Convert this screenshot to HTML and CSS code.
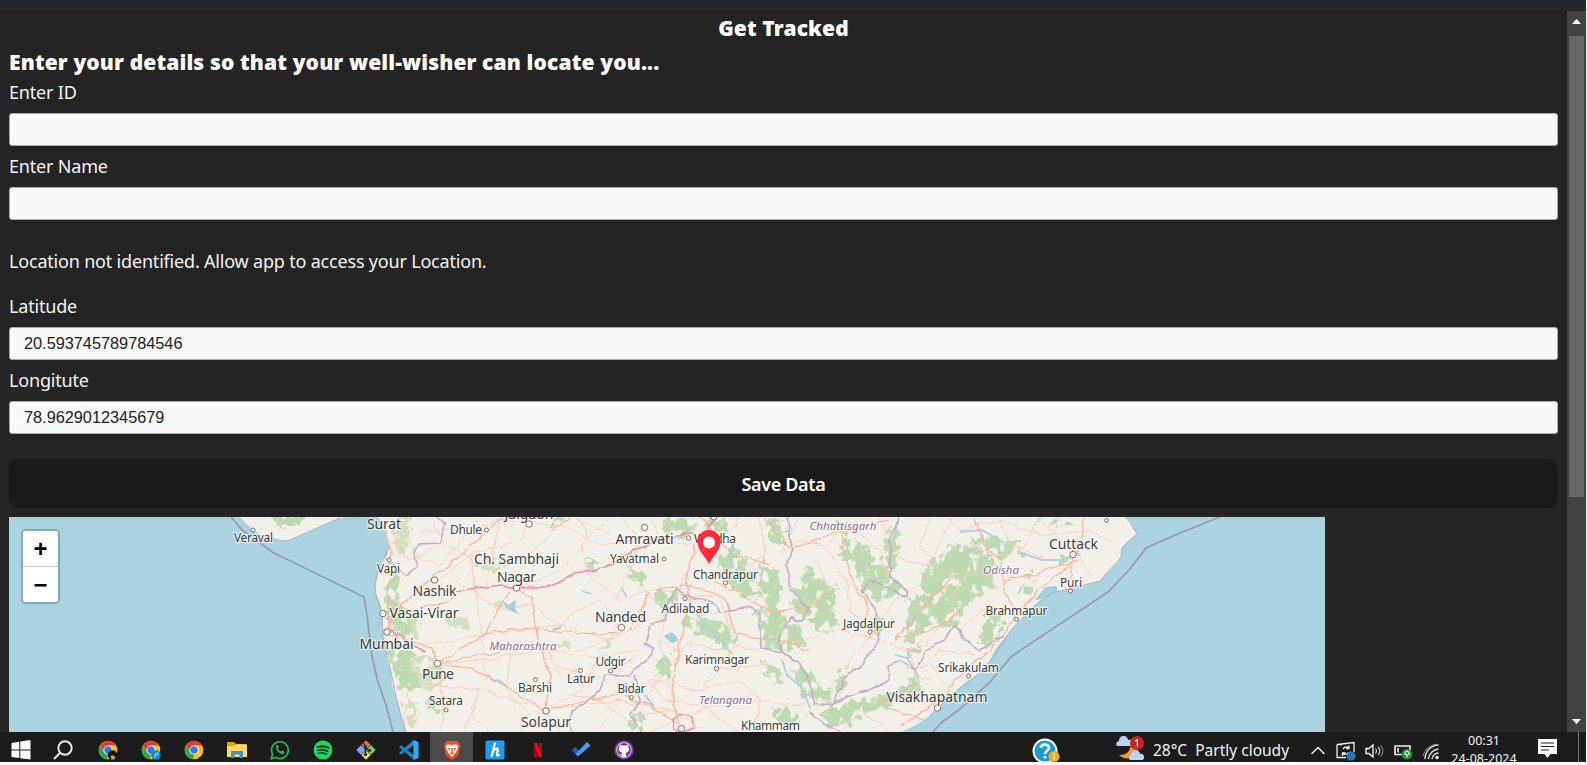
FILE: index.html
```html
<!DOCTYPE html>
<html lang="en">
<head>
<meta charset="utf-8">
<title>Get Tracked</title>
<link rel="stylesheet" href="styles.css">
</head>
<body>
<div class="screen">
  <div class="top-strip"></div>
  <div class="window">
    <main class="page">
      <h1 class="title">Get Tracked</h1>
      <h2 class="subtitle">Enter your details so that your well-wisher can locate you...</h2>
      <label class="label" for="id">Enter ID</label>
      <input class="field" id="id">
      <label class="label" for="name">Enter Name</label>
      <input class="field" id="name">
      <p class="notice">Location not identified. Allow app to access your Location.</p>
      <label class="label" for="lat">Latitude</label>
      <input class="field" id="lat" value="20.593745789784546">
      <label class="label" for="lng">Longitute</label>
      <input class="field" id="lng" value="78.9629012345679">
      <button class="save">Save Data</button>
      <div class="map">
        <svg class="map-canvas" width="1316" height="215" viewBox="9 517 1316 215">
          <defs>
            <filter id="rough" x="-5%" y="-5%" width="110%" height="110%">
              <feTurbulence type="fractalNoise" baseFrequency="0.11" numOctaves="3" seed="4" result="n"/>
              <feDisplacementMap in="SourceGraphic" in2="n" scale="19" xChannelSelector="R" yChannelSelector="G" result="d"/>
              <feTurbulence type="fractalNoise" baseFrequency="0.1 0.085" numOctaves="4" seed="9" result="m"/>
              <feColorMatrix in="m" type="matrix" values="0 0 0 0 0  0 0 0 0 0  0 0 0 0 0  9 0 0 0 -2.9" result="mask"/>
              <feComposite in="d" in2="mask" operator="in"/>
            </filter>
            <filter id="wiggle" x="-5%" y="-5%" width="110%" height="110%">
              <feTurbulence type="fractalNoise" baseFrequency="0.07" numOctaves="2" seed="2" result="n"/>
              <feDisplacementMap in="SourceGraphic" in2="n" scale="7" xChannelSelector="R" yChannelSelector="G"/>
            </filter>
            <clipPath id="land">
              <path d="M240 517L247 524 253 530 265 537 275 540 283 541 290 540 300 536 320 527 340 518 347 517Z
                M378 517L383 524 387 536 389 547 387 556 382 560 378 572 375 585 376 595 379 600 382 612 382 625 383 637 386 648 387 660 391 672 392 685 396 697 400 711 403 722 406 732H902L918 724 930 715 937 710 945 700 955 692 965 683 980 673 990 661 995 650 1003 640 1012 629 1020 621 1031 609 1040 600 1052 593 1065 590 1080 587 1100 581 1108 572 1117 563 1121 557 1122 548 1128 541 1137 534 1131 524 1124 517Z"/>
            </clipPath>
          </defs>
          <rect class="sea" x="9" y="517" width="1316" height="215"/>
          <g clip-path="url(#land)">
            <rect class="ground" x="230" y="517" width="920" height="215"/>
            <g class="forest" filter="url(#rough)">
              <path d="M270 515L305 515 300 525 280 527Z"/>
              <path class="pale" d="M395 515L412 515 406 545 398 560 392 590 402 610 415 615 420 640 408 640 388 590Z"/>
              <path d="M387 572L400 574 396 600 406 616 414 634 400 634 387 620ZM386 650L402 642 416 655 424 680 412 690 400 690 394 670ZM425 697L437 697 435 712 424 712Z"/>
              <path class="pale" d="M442 614L466 619 470 628 445 626ZM473 567L505 559 500 568 475 571ZM408 660L435 655 445 680 425 690ZM402 700L418 705 415 728 405 722Z"/>
              <path d="M548 520L566 518 568 524 550 525ZM582 562L600 560 592 567ZM626 568L642 572 645 585 632 580ZM654 592L676 590 672 608 657 607ZM658 655L672 653 669 680 658 676ZM632 717L645 718 638 730 629 728Z"/>
              <path class="pale" d="M558 641L572 644 570 650 560 649ZM605 642L616 643 610 651 602 650ZM494 601L508 604 503 609 495 606Z"/>
              <path d="M660 522L688 517 695 528 680 540 667 533ZM702 517L725 520 730 530 715 535ZM718 557L738 548 750 570 760 598 745 600 726 582Z"/>
              <path d="M684 614L705 620 730 626 738 640 728 650 705 638 686 626ZM755 612L775 604 786 620 782 650 766 650 762 630Z"/>
              <path d="M767 520L785 520 785 543 772 543ZM758 562L775 568 782 590 776 612 762 598Z"/>
              <path d="M802 565L818 578 836 583 834 600 836 633 818 632 806 618 794 610 790 590 800 588Z"/>
              <path d="M780 630L796 618 805 634 804 648 784 648ZM792 665L812 675 828 692 835 680 848 662 848 680 836 695 822 705 804 694Z"/>
              <path d="M763 662L785 672 780 688 762 676ZM772 705L798 712 800 730 775 722ZM820 714L855 699 890 694 912 684 922 690 900 702 870 712 850 724 826 728Z"/>
              <path d="M838 552L850 538 868 548 878 565 898 580 900 594 880 600 862 594 856 568Z"/>
              <path d="M874 618L890 618 880 636 870 628ZM835 524L850 526 850 536 838 532ZM886 525L900 530 898 560 885 572 884 548Z"/>
              <path d="M920 570L952 543 980 548 996 560 992 585 975 600 960 612 952 630 930 624 918 638 903 644 908 600 926 590Z"/>
              <path d="M968 542L985 535 1022 547 1028 553 1000 556ZM1022 574L1042 578 1032 590 1020 600ZM990 604L1003 620 992 646 978 638 985 620Z"/>
              <path d="M1060 557L1070 557 1064 566 1056 564ZM905 650L922 640 916 654 903 665ZM1055 517L1075 520 1068 526 1052 524ZM912 670L925 677 918 688 908 688Z"/>
              <path d="M995 620L1003 632 987 648 979 643ZM1038 522L1056 519 1052 525Z"/>
            </g>
            <g class="water">
              <path d="M501 599l7 6 8-5-1 9 4 5-8-3-5-3zM664 636l8-4 4 4 2 5-6 2-4-3zM915 613l-5 14 2-1 5-12zM1035 600l10-13 12-1 0 6-10 6z"/>
              <path class="stream" d="M488 675l6 6 5-1 8 7M582 591l9 3M621 588l6 9M553 629l8-1M645 695l8 10 1 5M641 717l5 3M782 660l5 15 15 13 8 20M1022 553l20 7 20 0 18-6M960 532l22-2 22 13M895 655l12 3 10 15M695 612l12 14 25 28M735 538l-6 20 5 10"/>
            </g>
            <g filter="url(#wiggle)">
              <path class="road minor" d="M396 517L420 560 440 565 480 517M420 530H470L500 520 560 525 600 545 640 540M500 517L495 545 486 586M530 517L520 540 470 555 440 580M580 517L590 540 560 570 515 590M610 517L580 545 590 575 620 600 650 590M470 555L475 590 482 640 486 680M486 634L560 625 610 640 650 620M435 665L480 660 540 650 600 657 640 650M435 665L445 700 440 732M400 640L430 645 486 634M420 684L480 690 545 710 620 700 670 710M545 710L560 732M600 657L580 690 545 710 520 732M547 650L560 675 580 670M650 517L660 540 690 545M640 585L665 610 660 640 680 650M690 640L660 675 640 715 680 710M660 590L690 595 720 597 735 645 760 650M735 645L720 670 700 690 650 680M700 690L740 680 760 700 755 732M720 670L770 665 790 680M650 732L680 717 710 732M680 717L670 690 660 640M680 717L740 700 805 705M760 517L765 550 755 580 770 610M720 582L755 560 765 555M740 517L730 535 700 545 690 560M800 517L780 555 800 540 830 545 840 522 880 550 890 580M825 545L845 580 850 610 870 630M870 637L835 630 805 640 780 650M870 637L895 600 920 585M870 637L850 660 840 700M870 637L910 650 915 675 930 680M880 517L900 560 930 565 945 530 950 517M930 565L960 580 980 570 1000 590M945 517L960 530 1000 520 1040 535 1090 530 1115 545M1040 517L1060 540 1075 550 1090 575M960 630L980 610 1010 612M905 670L930 665 945 685M880 705L905 695 915 708M890 732L860 710 840 732M400 517L395 550 410 560 440 545M410 690L400 732M420 715L410 725M465 732L480 690M595 732L620 700"/>
              <path class="road minor" d="M430 517L445 545 480 560 530 555 555 530M455 580L500 610 530 605 560 625 575 610 600 600M600 600L620 625 610 640 575 650M530 640L555 665 600 680 640 655M510 655L505 690 530 715M480 690L470 710 490 732M570 695L600 700 625 720M690 565L680 590 700 615 740 610M700 615L690 645 730 650M620 517L640 540 630 570 615 600M575 517L610 535M650 680L665 700 700 705 740 732M790 732L815 705M815 560L830 590 810 605 790 620M905 650L925 645 950 610 960 580M1040 517L1025 545 1000 555 970 545M1000 520L1010 545 1050 560M975 655L940 650 925 665M930 517L920 545 935 560 925 580"/>
              <path class="road" d="M384 525L392 560 388 600 388 634 410 640 430 650 437 664 470 668 500 683 545 711M383 634L395 610 430 580 450 565 487 530 505 517M388 600L410 610 440 605 455 595M437 664L485 634 510 590M550 530L570 517M437 664L480 655 520 650M516 588L530 595 540 645 550 680 545 711M486 634L520 628 580 633 620 635M545 711L590 700 620 695 650 705 678 725M700 517L710 530 720 545 735 555 770 565M695 545L686 585 690 600 678 650 672 690 680 725M686 585L650 590 630 630M686 585L725 598 735 635 780 640 810 650M716 582L750 600 775 612 820 605M765 517L790 550 840 530 890 520M840 530L850 580 865 600 870 637M960 732L880 705 920 680M902 725L935 705 955 680 990 650 1015 618 1038 590 1065 570 1078 550 1085 517M1073 550L1070 590M1015 617L1005 590 1000 560 985 545 975 517M1004 580L1030 575 1078 560M960 570L930 600 895 640M895 640L930 630 960 612"/>
              <path class="road major" d="M456 592L500 585 525 587 550 587 575 573 605 567 635 549 660 540 695 532M397 633L408 645 425 652M390 628L396 638 392 647M672 720l8-6 12 3 2 10-10 5-10-3zM705 532l10-15"/>
              <path class="border" d="M436 517L444 525 440 543 420 544 414 555 416 567 405 575 395 565 386 560M788 517L793 550 787 565 790 590 800 600 810 607 802 620 790 618 780 635 780 650 800 665 810 685 815 705 830 704 870 690 890 680 888 665 900 662 915 670 925 650 945 640 955 625 965 640 980 650 1003 635M780 652L762 648 760 635 760 615 750 605 735 610 720 612 712 602 690 596 675 588M675 588L670 600 665 620 650 625 645 645 655 650 640 665 630 675 605 675 600 690 585 705 572 710 570 732M634 675L640 700 630 715 640 732M900 517L890 540 890 575 905 590 905 595 885 587 870 580 862 590 875 610 880 640 865 660 845 680 835 702M810 712L825 725 840 732"/>
            </g>
          </g>
          <path class="coast" d="M265 537L283 541 290 540 340 518M389 547L378 572 375 585 376 595 382 612 383 637 391 672 396 697 403 722 406 732M930 715L955 692 980 673 990 661 1012 629 1031 609 1052 593 1100 581 1121 557 1122 548 1137 534 1131 524"/>
          <path class="maritime" d="M231 517L242 530 274 553 364 597 367 615 372 657 378 682 386 705 393 732M933 732L941 723 960 709 990 682 1012 656 1108 592 1130 569 1146 548 1180 533 1220 517"/>
          <g class="dots">
            <circle cx="434.500" cy="580" r="3.200"/><circle cx="516.500" cy="588" r="3.200"/><circle cx="644.500" cy="527.500" r="3.200"/><circle cx="529" cy="524" r="3.200"/><circle cx="383" cy="613.500" r="3.200"/><circle cx="387" cy="632" r="3.200"/><circle cx="437.500" cy="663.500" r="3.200"/><circle cx="621.500" cy="627.500" r="3.200"/><circle cx="546" cy="711" r="3.200"/><circle cx="681.500" cy="728.500" r="3.200"/><circle cx="937.500" cy="708" r="3.200"/><circle cx="1073" cy="554.500" r="3.200"/><circle cx="714" cy="517" r="3"/>
            <circle cx="253" cy="530" r="2"/><circle cx="389" cy="560" r="2"/><circle cx="486.500" cy="530" r="2"/><circle cx="664" cy="559" r="2"/><circle cx="688.500" cy="538" r="2.200"/><circle cx="725.500" cy="583" r="2"/><circle cx="685" cy="598.500" r="2.200"/><circle cx="716.500" cy="668.500" r="2.200"/><circle cx="580.500" cy="670.500" r="2"/><circle cx="610.500" cy="671" r="2"/><circle cx="535.500" cy="679.500" r="2"/><circle cx="631.500" cy="697.500" r="2"/><circle cx="446" cy="710" r="2"/><circle cx="870" cy="632" r="2"/><circle cx="1016.500" cy="619.500" r="2"/><circle cx="1070.500" cy="591" r="2"/><circle cx="968.500" cy="676" r="2"/><circle cx="1106.500" cy="520.500" r="2"/>
          </g>
          <g class="city">
            <text x="384" y="529" textLength="34">Surat</text><text x="529" y="519" textLength="49">Jalgaon</text><text x="516.500" y="564" textLength="85">Ch. Sambhaji</text><text x="516.500" y="582" textLength="39">Nagar</text><text x="644.500" y="544" textLength="58">Amravati</text><text x="434.500" y="595.500" textLength="44">Nashik</text><text x="424" y="618" textLength="69">Vasai-Virar</text><text x="386.500" y="649" textLength="54">Mumbai</text><text x="438" y="679" textLength="32">Pune</text><text x="620.500" y="621.500" textLength="51">Nanded</text><text x="546" y="727" textLength="50">Solapur</text><text x="937" y="702" textLength="101">Visakhapatnam</text><text x="1073.500" y="549" textLength="49">Cuttack</text>
          </g>
          <g class="town">
            <text x="253.500" y="542" textLength="39">Veraval</text><text x="388.500" y="573" textLength="23">Vapi</text><text x="466" y="534" textLength="32">Dhule</text><text x="634.500" y="562.500" textLength="49">Yavatmal</text><text x="715" y="542.500" textLength="42">Wardha</text><text x="725.500" y="578.500" textLength="65">Chandrapur</text><text x="685.500" y="612.500" textLength="48">Adilabad</text><text x="717" y="663.500" textLength="64">Karimnagar</text><text x="610.500" y="666" textLength="30">Udgir</text><text x="581" y="683" textLength="28">Latur</text><text x="535" y="692" textLength="34">Barshi</text><text x="631.500" y="692.500" textLength="28">Bidar</text><text x="446" y="705" textLength="34">Satara</text><text x="770.500" y="729.500" textLength="59">Khammam</text><text x="869" y="627.500" textLength="52">Jagdalpur</text><text x="1016.500" y="615" textLength="62">Brahmapur</text><text x="1071" y="587" textLength="22">Puri</text><text x="968.500" y="671.500" textLength="61">Srikakulam</text>
          </g>
          <g class="state">
            <text x="523" y="649.500" textLength="67">Maharashtra</text><text x="725.500" y="703.500" textLength="53">Telangana</text><text x="843" y="530" textLength="67">Chhattisgarh</text><text x="1001" y="573.500" textLength="36">Odisha</text>
          </g>
          <path class="pin" d="M709 564C706 557 697.500 551 697.500 541.500a11.500 11.500 0 0 1 23 0C720.500 551 712 557 709 564Z"/>
          <circle class="pin-hole" cx="709" cy="542.500" r="6"/>
        </svg>
        <div class="zoom"><button class="zoom-btn">+</button><button class="zoom-btn">−</button></div>
      </div>
    </main>
    <div class="scrollbar">
      <svg width="9" height="5" viewBox="0 0 9 5"><path fill="#fff" d="M0 5L4.500 0 9 5Z"/></svg>
      <div class="thumb"></div>
      <svg width="9" height="5" viewBox="0 0 9 5"><path fill="#fff" d="M0 0H9L4.500 5Z"/></svg>
    </div>
  </div>
  <footer class="taskbar">
    <div class="apps">
      <span class="app first"><svg width="20" height="20" viewBox="0 0 20 20"><path fill="#fff" d="M.5 3L8.300 1.800V9.400H.5ZM9.300 1.600L19.500 0V9.400H9.300ZM.5 10.400H8.300V18L.5 17ZM9.300 10.400H19.500V19.600L9.300 18.200Z"/></svg></span>
      <span class="app search"><svg width="20" height="20" viewBox="0 0 20 20"><circle cx="12" cy="8" r="6.700" fill="none" stroke="#eee" stroke-width="1.900"/><path stroke="#eee" stroke-width="2" d="M7 13L1 19"/></svg></span>
      <span class="app"><svg width="20" height="20" viewBox="0 0 20 20"><g id="chrome"><circle cx="10" cy="10" r="9.300" fill="#fbc116"/><path fill="#e33b2e" d="M2 5.300A9.300 9.300 0 0 1 18 5.300H10L6 12.300Z"/><path fill="#2da94f" d="M2 5.300L6 12.300 10 14.500 9 19.300A9.300 9.300 0 0 1 2 5.300Z"/><circle cx="10" cy="10" r="4.600" fill="#fff"/><circle cx="10" cy="10" r="3.700" fill="#3578e5"/></g><circle cx="14.500" cy="15" r="4.700" fill="#15110f"/><path fill="#bb9b88" d="M12.500 16.500l2-1.500 3 2-1 2.500-3 .3z"/></svg></span>
      <span class="app"><svg width="20" height="20" viewBox="0 0 20 20"><use href="#chrome"/><circle cx="15" cy="15" r="4.800" fill="#1086cf"/><path stroke="#8cd0ef" fill="none" d="M13.500 18l1-5h2.500l-.5 2.500h-2"/></svg></span>
      <span class="app"><svg width="20" height="20" viewBox="0 0 20 20"><use href="#chrome"/></svg></span>
      <span class="app"><svg width="20" height="20" viewBox="0 0 20 20"><path fill="#e5a51b" d="M0 2H7L9 4H19V8H0Z"/><path fill="#ffd766" d="M0 6H7L9 4.500H20V17H0Z"/><path fill="#3c91d3" d="M4 18V11H16V18H12.500V14.500H7.500V18Z"/></svg></span>
      <span class="app"><svg width="20" height="20" viewBox="0 0 20 20"><path fill="none" stroke="#25b65b" stroke-width="1.800" d="M1.300 18.700L2.500 14A8.400 8.400 0 1 1 6 17.500Z"/><path fill="#25b65b" d="M6.400 5.500c.7-.8 1.500-.5 1.700.1l.7 1.800-.9 1.200c.7 1.500 1.800 2.400 3.200 3l1.200-1.200 2 1c.8.5-.1 2.400-1.500 2.700-3.300.5-8.200-4.500-6.400-8.600z"/></svg></span>
      <span class="app"><svg width="20" height="20" viewBox="0 0 20 20"><circle cx="10" cy="10" r="9.400" fill="#1ed760"/><path fill="none" stroke="#14351f" stroke-linecap="round" stroke-width="1.800" d="M4.500 7c4-1.200 8-.8 11.200 1M5 10.300c3.500-1 6.800-.6 9.600 1"/><path fill="none" stroke="#14351f" stroke-linecap="round" stroke-width="1.400" d="M5.500 13.300c3-.7 5.600-.4 8 .9"/></svg></span>
      <span class="app"><svg width="20" height="20" viewBox="0 0 20 20"><path fill="#f0645c" d="M10 .3L14.700 5 10 9.700 5.300 5Z"/><path fill="#78a8f5" d="M5 5.300L9.700 10 5 14.700.3 10Z"/><path fill="#7fc75a" d="M15 5.300L19.700 10 15 14.700 10.300 10Z"/><path fill="#f7d268" d="M10 10.300L14.700 15 10 19.700 5.300 15Z"/><path fill="none" stroke="#252525" stroke-width="1.400" d="M7.500 3.500L9.500 6V15M9.500 8L14 11"/><circle cx="9.500" cy="7" r="1.500" fill="#252525"/><circle cx="9.500" cy="14.500" r="1.600" fill="#252525"/><circle cx="13.500" cy="10.500" r="1.600" fill="#252525"/></svg></span>
      <span class="app"><svg width="20" height="20" viewBox="0 0 20 20"><path fill="#1685c9" d="M.3 6.500L2 5.200 15 15V19.500L.3 7.500ZM15 .5V5L2 14.800.3 13.500V12.500L14 .5Z"/><path fill="#30aaf2" d="M14.500 0L19.500 2V18L14.500 20Z"/></svg></span>
      <span class="app active"><svg width="20" height="20" viewBox="0 0 20 20"><path fill="#fa4b20" d="M5 1H15L18 4 16.500 15 10 20 3.500 15 2 4Z"/><path fill="#fff" d="M4.500 5l2.500-.8 3 .8 3-.8 2.500.8 1 2-3 6-3.500 4-3.500-4-3-6z"/><path fill="#fa4b20" d="M5.500 7.500l3 1-1 2.500zM14.500 7.500l-3 1 1 2.500zM9.300 8h1.400v4H9.300zM7.500 13l2.500-1 2.500 1-2.500 1.500z"/></svg></span>
      <span class="app"><svg width="20" height="20" viewBox="0 0 20 20"><rect x=".5" y=".5" width="19" height="19" rx="1.500" fill="#229bee"/><path fill="none" stroke="#fff" stroke-width="2.200" stroke-linecap="round" d="M9.800 3.500L6.700 16M7.500 12C9 8.500 13 7.500 12.800 10L12 14c-.2 2 1 2 2 1"/></svg></span>
      <span class="app"><svg width="20" height="20" viewBox="0 0 20 20"><path fill="#a50d13" d="M6 3H9V17H6ZM11 3H14V17H11Z"/><path fill="#e5141e" d="M6 3H9L14 17H11Z"/></svg></span>
      <span class="app"><svg width="20" height="20" viewBox="0 0 20 20"><path fill="#1f5bbd" d="M.5 10L4 7 10 13 7 16.500Z"/><path fill="#469cec" d="M7 16.500L4.500 14 16 2 19.500 5.500Z"/></svg></span>
      <span class="app"><svg width="20" height="20" viewBox="0 0 20 20"><circle cx="10" cy="10" r="8.700" fill="#fff" stroke="#7931a4" stroke-width="2"/><circle cx="10" cy="10" r="7" fill="#7931a4"/><path fill="#fff" d="M6 4.500L8.500 5.500H11.500L14 4.500 14.500 7C16 10 14.500 12.200 12 12.700V17H8V15.300C6.500 15.500 6 14.500 5.500 13.800 7 13.600 7 14.500 8 14.200V12.700C5.500 12.200 4 10 5.500 7Z"/></svg></span>
    </div>
    <div class="status">
      <span class="cell help"><svg width="28" height="28" viewBox="0 0 28 28"><circle cx="13" cy="13" r="11.500" fill="#169bd7" stroke="#fff" stroke-width="2"/><path fill="none" stroke="#fff" stroke-width="2.700" d="M8.800 9.800C9 5.500 17 5.500 17 9.500c0 3-4 3-4 6.500M13 18v2.500"/><circle cx="22" cy="18.500" r="5.500" fill="#f3aa1b"/><path stroke="#fff" stroke-width="1.600" d="M22 15v1.600M22 17.500v4"/></svg></span>
      <span class="cell weather"><svg width="28" height="26" viewBox="0 0 28 26"><path fill="#f39a2c" d="M22 10a11 11 0 0 1-19 9c8 0 10-3 12-9z"/><path fill="#b8d2f5" d="M1 10a3 3 0 0 1 2-5 4.500 4.500 0 0 1 9-1 3 3 0 0 1 3 6zM14 24a3 3 0 0 1 1-5 4.500 4.500 0 0 1 9-1 3 3 0 0 1 2 6z"/><circle cx="21" cy="7" r="7" fill="#c72220"/><path fill="none" stroke="#fff" stroke-width="1.100" d="M19.300 5L21.300 3.500V10.500"/></svg></span>
      <span class="forecast">28°C&nbsp; Partly cloudy</span>
      <span class="cell"><svg width="16" height="9" viewBox="0 0 16 9"><path fill="none" stroke="#eee" stroke-width="1.500" d="M1.500 8L8 1.500 14.500 8"/></svg></span>
      <span class="cell"><svg width="20" height="20" viewBox="0 0 20 20"><path fill="none" stroke="#eee" stroke-width="1.300" d="M1 3.500L18 1.500V11M1 3.500V16.500H10M1 3.500H6"/><path fill="none" stroke="#eee" stroke-width="1.300" d="M13 7Q9.500 4.500 7 8M13 4.500V7.500H10M6.500 12.500Q9.500 14.500 12.500 11.500M6.500 15V12H9.500"/><circle cx="15" cy="15" r="4.500" fill="#2d72bd"/></svg></span>
      <span class="cell"><svg width="20" height="16" viewBox="0 0 20 16"><path fill="none" stroke="#eee" stroke-width="1.400" d="M1 5.500H4L8 2V14L4 10.500H1Z"/><path fill="none" stroke="#ccc" stroke-width="1.200" d="M10.500 5.500q2 2.500 0 5M13 4q3.500 4 0 8"/><path fill="none" stroke="#777" stroke-width="1.200" d="M15.500 2.500q5 5.500 0 11"/></svg></span>
      <span class="cell"><svg width="20" height="18" viewBox="0 0 20 18"><path fill="none" stroke="#eee" stroke-width="1.600" d="M2 4H17V12.500H2ZM5 6V10.500"/><circle cx="14" cy="12" r="5.300" fill="#179a35"/><path fill="none" stroke="#d9ffe0" stroke-width="1.200" d="M12 12.500q0-3 2-3.500 2 .5 2 3.500zM14 12.500v3"/></svg></span>
      <span class="cell"><svg width="18" height="18" viewBox="0 0 18 18"><g fill="none" stroke="#ddd" stroke-width="1.400"><path d="M3 17A14 14 0 0 1 16.500 3M6.500 17A11 11 0 0 1 16.500 7M10 17A7 7 0 0 1 16.500 11"/></g><path stroke="#888" fill="none" d="M1 14A16 16 0 0 1 14 2"/><circle cx="15" cy="15.500" r="1.700" fill="#eee"/></svg></span>
      <div class="clock"><span>00:31</span><span>24-08-2024</span></div>
      <span class="cell note"><svg width="19" height="19" viewBox="0 0 19 19"><path fill="#fff" d="M0 0H19V15H12.500L9.500 19 6.500 15H0Z"/><path stroke="#222" stroke-width="1.200" d="M3 4H16M3 7.500H16M3 11H11"/></svg></span>
    </div>
  </footer>
</div>
</body>
</html>
```

FILE: styles.css
```css
* { box-sizing: border-box; }
body { margin: 0; background: #fff; font-family: "Noto Sans", sans-serif; color: #f3f3f3; overflow: hidden; }
.screen { width: 1586px; height: 762px; display: flex; flex-direction: column; background: #242424; overflow: hidden; }
.top-strip { flex: 0 0 11px; background: #23282c; }
.window { flex: 0 0 721px; display: flex; overflow: hidden; }
.page { flex: 1; padding: 0 9px; display: flex; flex-direction: column; overflow: hidden; }
.title, .subtitle { margin: 0; font-size: 21px; font-weight: 900; line-height: 35px; letter-spacing: .14px; color: #fff; white-space: nowrap; }
.title { text-align: center; height: 35px; }
.subtitle { height: 33px; line-height: 33px; }
.label { display: block; font-size: 18px; line-height: 26px; height: 34px; letter-spacing: -.19px; white-space: nowrap; }
.field { display: block; width: 100%; height: 33px; margin: 0 0 7.350px; padding: 0 14px; border: 1px solid #aaa; border-radius: 3px; background: #f8f8f8; color: #222; font: 16.300px "Liberation Sans", sans-serif; flex: none; }
.notice { margin: 19.500px 0 18.500px; height: 28px; line-height: 28px; font-size: 18px; letter-spacing: -.19px; white-space: nowrap; }
.save { flex: 0 0 49px; margin: 18px 0 9px; border: 0; border-radius: 9px; background: #1a1a1a; color: #fff; font: 600 18px "Noto Sans", sans-serif; letter-spacing: -.35px; }
.map { position: relative; width: 1316px; height: 215px; flex: none; }
.map-canvas { display: block; }
.sea { fill: #aad3df; }
.ground { fill: #f2efe9; }
.forest { fill: #bddab1; }
.forest .pale { fill: #d3e0bd; }
.water { fill: #9fcfe0; }
.stream { fill: none; stroke: #a7d3e2; stroke-width: 1.800; }
.road { fill: none; stroke: #f9b29c; stroke-width: 1.200; stroke-linejoin: round; }
.road.minor { stroke: #fac9b8; stroke-width: .9; }
.road.major { stroke: #ec93a4; stroke-width: 1.700; }
.border { fill: none; stroke: #c3afc7; stroke-width: 1.600; }
.coast { fill: none; stroke: #a79cbb; stroke-width: .8; }
.maritime { fill: none; stroke: #9c98b4; stroke-width: 1.700; }
.dots { fill: #fff; stroke: #777468; stroke-width: 1; }
.map text { font-family: "Noto Sans", sans-serif; text-anchor: middle; fill: #3d3d3b; paint-order: stroke; stroke: rgba(255, 255, 255, .65); stroke-width: 2.500px; stroke-linejoin: round; }
.city text { font-size: 14px; }
.town text { font-size: 12px; }
.map .state text { font-size: 11.500px; font-style: italic; fill: #8b6a98; }
.pin { fill: #ff2b3c; }
.pin-hole { fill: #fff; }
.zoom { position: absolute; left: 12px; top: 12px; width: 39px; border: 2px solid #86a7b1; border-radius: 5px; background: #fff; overflow: hidden; }
.zoom-btn { display: block; width: 100%; height: 35px; padding: 0; border: 0; background: #fff; color: #000; font: bold 24px/34px "Liberation Sans", sans-serif; }
.zoom-btn:first-child { height: 36px; border-bottom: 1px solid #ccc; }
.scrollbar { flex: 0 0 19px; background: #424242; display: flex; flex-direction: column; align-items: center; padding: 8px 0; }
.thumb { width: 15px; height: 461px; margin: 12px 0 auto; background: #686868; }
.taskbar { flex: 0 0 30px; display: flex; justify-content: space-between; background: #1c1c1c; overflow: hidden; }
.apps { display: flex; }
.app { width: 43px; height: 30px; display: flex; align-items: center; justify-content: center; padding-top: 5px; }
.app.first { padding-right: 1px; }
.app.search { padding-right: 4px; }
.app.active { background: #4b4b4b; }
.status { display: flex; width: 555px; height: 30px; }
.cell { flex: 0 0 28.300px; display: flex; align-items: center; justify-content: center; padding-top: 7px; }
.help { flex-basis: 29px; align-items: flex-start; padding-top: 6px; }
.weather { flex-basis: 28px; margin-left: 56px; align-items: flex-start; padding-top: 4px; }
.forecast { width: 151px; margin-left: 9px; font-size: 15.500px; line-height: 37px; white-space: nowrap; }
.clock { width: 77px; display: flex; flex-direction: column; align-items: center; font-size: 12.500px; line-height: 18px; }
.note { flex-basis: 57px; border-right: 1px solid #777; margin-right: 4px; padding-top: 3px; padding-right: 6px; }
```
